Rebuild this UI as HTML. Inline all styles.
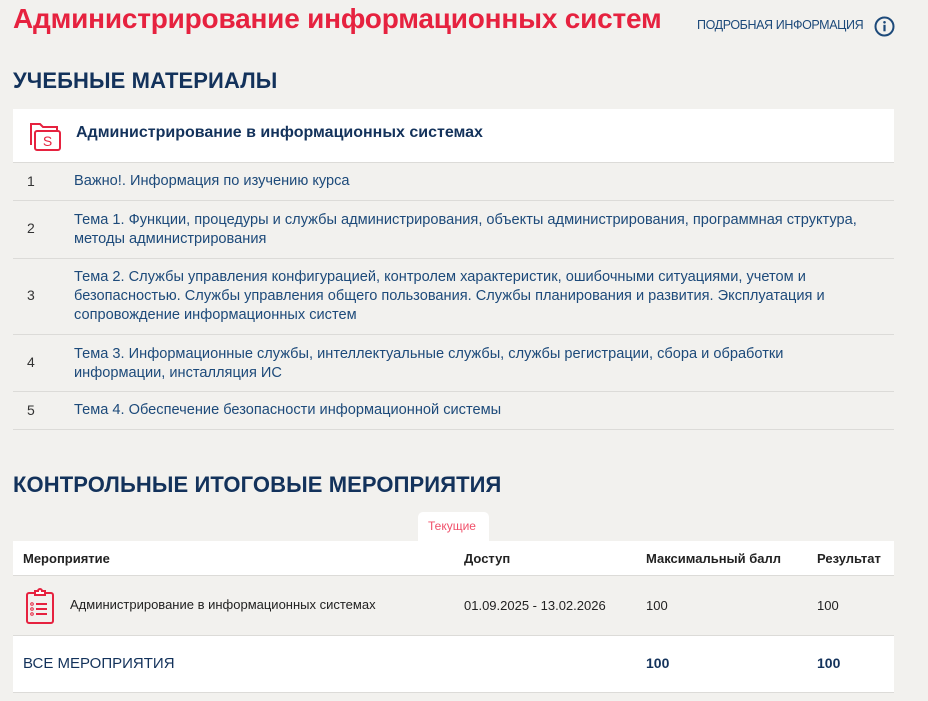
<!DOCTYPE html>
<html><head><meta charset="utf-8"><style>
body{margin:0;background:#f2f1ee;font-family:"Liberation Sans",sans-serif;width:928px;height:701px;overflow:hidden;position:relative;color:#1d3a5f}
.a{position:absolute}
h1{position:absolute;left:13px;top:3px;margin:0;font-size:28px;color:#e6223f;font-weight:bold;letter-spacing:-0.2px}
.info{left:697px;top:18px;font-size:12.5px;color:#1d4a7a;letter-spacing:-0.4px}
h2{position:absolute;margin:0;font-size:22px;color:#13325b;font-weight:bold;letter-spacing:0.1px}
.line{position:absolute;left:13px;width:881px;height:1px;background:#dcdbd8}
.num{position:absolute;left:27px;font-size:14px;color:#333}
.t{position:absolute;left:74px;width:815px;font-size:14.6px;line-height:19px;color:#1d4a7a;white-space:nowrap}
.w{position:absolute;left:13px;width:881px;background:#fff}
.s{font-size:13px;color:#222}
.b{font-size:14px;font-weight:bold;color:#13325b}
</style></head><body>
<h1>Администрирование информационных систем</h1>
<div class="a info">ПОДРОБНАЯ ИНФОРМАЦИЯ</div>
<svg class="a" style="left:874px;top:16px" width="21" height="21" viewBox="0 0 21 21"><circle cx="10.5" cy="10.5" r="9" fill="none" stroke="#1d4a7a" stroke-width="2"/><circle cx="10.5" cy="6.3" r="1.3" fill="#1d4a7a"/><rect x="9.4" y="8.8" width="2.2" height="6.5" fill="#1d4a7a"/></svg>
<h2 style="left:13px;top:68px">УЧЕБНЫЕ МАТЕРИАЛЫ</h2>
<div class="w" style="top:109px;height:53px"></div>
<svg class="a" style="left:29px;top:121px" width="33" height="30" viewBox="0 0 33 30"><path d="M2 24V3h9l3 3h14v4" fill="none" stroke="#e6223f" stroke-width="2"/><rect x="6" y="10" width="25" height="19" rx="2" fill="none" stroke="#e6223f" stroke-width="2"/><text x="18.5" y="25" text-anchor="middle" font-size="14" fill="#e6223f" font-family="Liberation Sans">S</text></svg>
<div class="a" style="left:76px;top:124px;font-size:16px;font-weight:bold;color:#13325b">Администрирование в информационных системах</div>
<div class="line" style="top:162px"></div>
<div class="num" style="top:173px">1</div><div class="t" style="top:172px">Важно!. Информация по изучению курса</div>
<div class="line" style="top:200px"></div>
<div class="num" style="top:220px">2</div><div class="t" style="top:211px">Тема 1. Функции, процедуры и службы администрирования, объекты администрирования, программная структура,<br>методы администрирования</div>
<div class="line" style="top:258px"></div>
<div class="num" style="top:287px">3</div><div class="t" style="top:268px">Тема 2. Службы управления конфигурацией, контролем характеристик, ошибочными ситуациями, учетом и<br>безопасностью. Службы управления общего пользования. Службы планирования и развития. Эксплуатация и<br>сопровождение информационных систем</div>
<div class="line" style="top:334px"></div>
<div class="num" style="top:354px">4</div><div class="t" style="top:345px">Тема 3. Информационные службы, интеллектуальные службы, службы регистрации, сбора и обработки<br>информации, инсталляция ИС</div>
<div class="line" style="top:391px"></div>
<div class="num" style="top:402px">5</div><div class="t" style="top:401px">Тема 4. Обеспечение безопасности информационной системы</div>
<div class="line" style="top:429px"></div>
<h2 style="left:13px;top:472px">КОНТРОЛЬНЫЕ ИТОГОВЫЕ МЕРОПРИЯТИЯ</h2>
<div class="a" style="left:418px;top:512px;width:71px;height:30px;background:#fff;border-radius:5px 5px 0 0"></div>
<div class="a" style="left:428px;top:519px;font-size:12px;color:#f0506a">Текущие</div>
<div class="w" style="top:541px;height:34px"></div>
<div class="a s" style="left:23px;top:551px;font-weight:bold">Мероприятие</div>
<div class="a s" style="left:464px;top:551px;font-weight:bold">Доступ</div>
<div class="a s" style="left:646px;top:551px;font-weight:bold">Максимальный балл</div>
<div class="a s" style="left:817px;top:551px;font-weight:bold">Результат</div>
<div class="line" style="top:575px"></div>
<svg class="a" style="left:25px;top:587px" width="32" height="38" viewBox="0 0 32 38"><rect x="2" y="6" width="26" height="30" rx="2" fill="none" stroke="#e6223f" stroke-width="2"/><path d="M10 8V4h3a2 2 0 0 1 4 0h3v4z" fill="#fff" stroke="#e6223f" stroke-width="2"/><circle cx="7" cy="17" r="1.3" fill="none" stroke="#e6223f"/><circle cx="7" cy="22" r="1.3" fill="none" stroke="#e6223f"/><circle cx="7" cy="27" r="1.3" fill="none" stroke="#e6223f"/><path d="M11 17h11M11 22h11M11 27h11" stroke="#e6223f" stroke-width="2"/></svg>
<div class="a s" style="left:70px;top:597px">Администрирование в информационных системах</div>
<div class="a s" style="left:464px;top:598px">01.09.2025 - 13.02.2026</div>
<div class="a s" style="left:646px;top:598px">100</div>
<div class="a s" style="left:817px;top:598px">100</div>
<div class="line" style="top:635px"></div>
<div class="w" style="top:636px;height:56px"></div>
<div class="a b" style="left:23px;top:655px;font-weight:normal;font-size:15px">ВСЕ МЕРОПРИЯТИЯ</div>
<div class="a b" style="left:646px;top:655px">100</div>
<div class="a b" style="left:817px;top:655px">100</div>
<div class="line" style="top:692px"></div>
</body></html>
